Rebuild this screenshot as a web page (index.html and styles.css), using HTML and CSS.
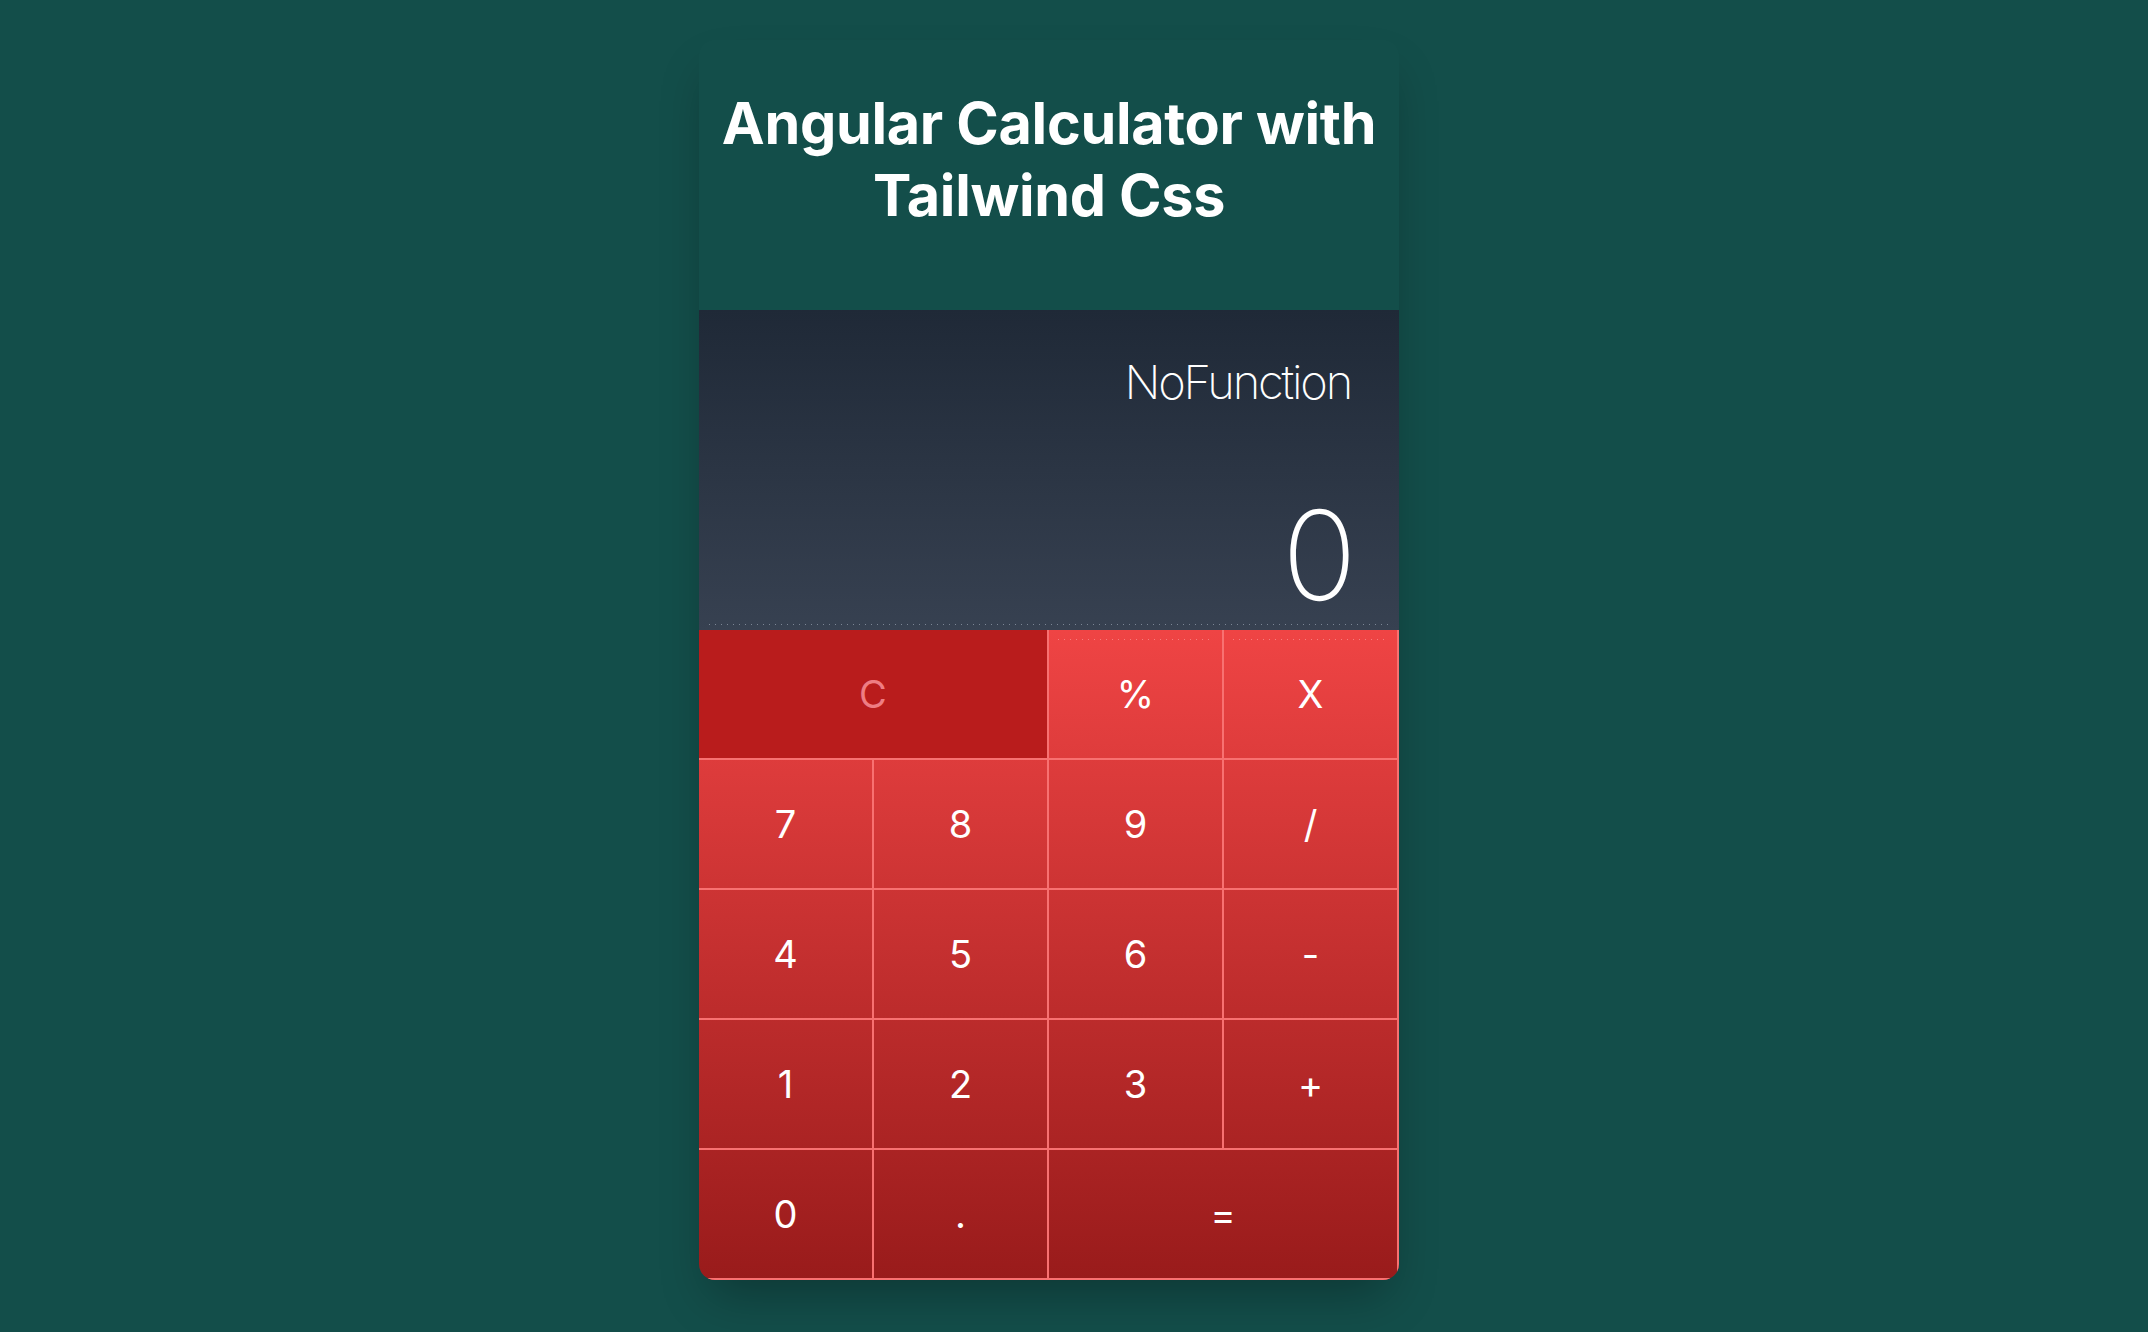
FILE: index.html
```html
<!DOCTYPE html>
<html lang="en">
<head>
<meta charset="utf-8">
<title>Angular Calculator with Tailwind Css</title>
<link rel="stylesheet" href="styles.css">
</head>
<body>
<div class="page">
  <div class="card">
    <header class="header">
      <h1 class="title">Angular Calculator with<br>Tailwind Css</h1>
    </header>
    <section class="display">
      <div class="func">NoFunction</div>
      <div class="value">0</div>
    </section>
    <section class="keys">
      <button class="key key-clear span2">C</button>
      <button class="key key-dots">%</button>
      <button class="key key-dots">X</button>
      <button class="key">7</button>
      <button class="key">8</button>
      <button class="key">9</button>
      <button class="key">/</button>
      <button class="key">4</button>
      <button class="key">5</button>
      <button class="key">6</button>
      <button class="key">-</button>
      <button class="key">1</button>
      <button class="key">2</button>
      <button class="key">3</button>
      <button class="key">+</button>
      <button class="key">0</button>
      <button class="key">.</button>
      <button class="key span2">=</button>
    </section>
  </div>
</div>
</body>
</html>
```

FILE: styles.css
```css
* { box-sizing: border-box; }
html, body {
  margin: 0;
  padding: 0;
  background: #134e4a;
  font-family: Inter, "Noto Sans", sans-serif;
  color: #fff;
}
.page {
  min-height: 1332px;
  padding: 40px 50px 0 0;
  display: flex;
  justify-content: center;
  align-items: flex-start;
}
.card {
  width: 700px;
  border-radius: 16px;
  overflow: hidden;
  box-shadow: 0 25px 50px -12px rgba(0, 0, 0, 0.3);
}
.header {
  padding: 47px 0 79px;
  text-align: center;
}
.title {
  margin: 0;
  font-size: 57.5px;
  line-height: 72px;
  font-weight: 700;
  letter-spacing: -0.3px;
  color: #fff;
}
.display {
  position: relative;
  height: 320px;
  padding: 48px 48px 15px;
  display: flex;
  flex-direction: column;
  justify-content: space-between;
  align-items: flex-end;
  background: linear-gradient(to bottom, #1f2937, #374151);
}
.display::after {
  content: "";
  position: absolute;
  left: 10px;
  right: 7px;
  bottom: 5px;
  height: 1px;
  background: linear-gradient(to right, rgba(140, 150, 165, 0.8) 1px, transparent 1px) repeat-x;
  background-size: 6px 1px;
}
.func {
  font-size: 47px;
  line-height: 48px;
  font-weight: 200;
  letter-spacing: -2.2px;
}
.value {
  margin-right: -6px;
  font-size: 124px;
  line-height: 120px;
  font-weight: 200;
}
.keys {
  display: grid;
  grid-template-columns: repeat(4, 1fr);
  grid-auto-rows: 130px;
  background: linear-gradient(to bottom, #ef4444, #991b1b);
}
.key {
  position: relative;
  margin: 0;
  padding: 0;
  border: 0;
  border-right: 2px solid #f87171;
  border-bottom: 2px solid #f87171;
  background: transparent;
  color: #fff;
  font-family: Inter, "Noto Sans", sans-serif;
  font-size: 38px;
  font-weight: 400;
  cursor: pointer;
}
.span2 { grid-column: span 2; }
.key-clear {
  background: #b91c1c;
  color: #ee7d83;
}
.key-dots::before {
  content: "";
  position: absolute;
  left: 9px;
  right: 9px;
  top: 9px;
  height: 1px;
  background: linear-gradient(to right, rgba(252, 150, 150, 0.7) 1px, transparent 1px) repeat-x;
  background-size: 6px 1px;
}
```
